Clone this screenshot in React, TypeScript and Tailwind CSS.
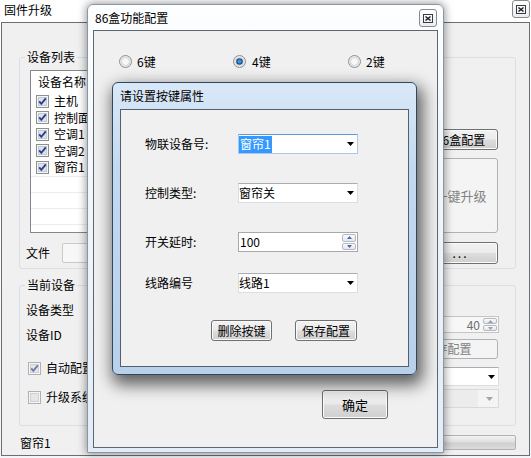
import type { ReactNode } from 'react'

// ─── Common control styles ────────────────────────────────────────────────────

const BUTTON =
  'flex items-center justify-center rounded-[3px] border border-[#707070] bg-[linear-gradient(to_bottom,#f2f2f2_0%,#ebebeb_48%,#dddddd_52%,#cfcfcf_100%)] shadow-[inset_0_0_0_1px_#fbfbfb] text-[12px] leading-none text-black'

const BUTTON_DISABLED =
  'flex items-center justify-center rounded-[3px] border border-[#adb2b5] bg-[#f4f4f4] text-[12px] leading-none text-[#838383]'

function CloseButton() {
  return (
    <div className="flex h-[18px] w-[18px] items-center justify-center rounded-[3px] border border-[#8a8a8a] bg-[linear-gradient(to_bottom,#ffffff,#e9edf2)]">
      <svg width="10" height="9" viewBox="0 0 10 9">
        <rect x="0.5" y="0.5" width="9" height="8" fill="none" stroke="#3a3a3a" />
        <path d="M2.5 2.5 L7.5 6.5 M7.5 2.5 L2.5 6.5" stroke="#1a1a1a" strokeWidth="1.4" />
      </svg>
    </div>
  )
}

function CheckBox({ checked, disabled }: { checked?: boolean; disabled?: boolean }) {
  return (
    <svg width="13" height="13" viewBox="0 0 13 13" className="shrink-0">
      <rect x="0.5" y="0.5" width="12" height="12" fill="#f6f6f6" stroke={disabled ? '#b1b1b1' : '#8e8f8f'} />
      <rect x="2.5" y="2.5" width="8" height="8" fill={disabled ? '#e6e6e6' : '#dde3ea'} stroke={disabled ? '#d0d0d0' : '#c3c9d1'} />
      {checked && (
        <path d="M3.2 6.4 L5.3 8.8 L9.8 3.4" fill="none" stroke={disabled ? '#6b7db0' : '#2a3f8f'} strokeWidth="1.9" />
      )}
    </svg>
  )
}

function Radio({ checked }: { checked?: boolean }) {
  return (
    <svg width="13" height="13" viewBox="0 0 13 13" className="shrink-0">
      <circle cx="6.5" cy="6.5" r="6" fill="#e9e9e9" stroke="#8e8f8f" />
      <circle cx="6.5" cy="6.5" r="4" fill="#f7f7f7" stroke="#d4d4d4" />
      {checked && (
        <>
          <circle cx="6.5" cy="6.5" r="3.3" fill="#1b4f8d" />
          <circle cx="6.5" cy="6.5" r="2" fill="#3f93d9" />
        </>
      )}
    </svg>
  )
}

function DropArrow({ color = '#000' }: { color?: string }) {
  return (
    <svg width="7" height="4" viewBox="0 0 7 4" className="ml-auto mr-[3px] shrink-0">
      <path d="M0 0 H7 L3.5 4 Z" fill={color} />
    </svg>
  )
}

function SpinButtons({ color = '#4a68a8' }: { color?: string }) {
  return (
    <div className="my-px mr-px flex w-[14px] flex-col gap-px">
      <div className="flex flex-1 items-center justify-center rounded-[2px] border border-[#b4bac4] bg-[linear-gradient(to_bottom,#fbfbfb,#e2e5ea)]">
        <svg width="5" height="3" viewBox="0 0 5 3">
          <path d="M0 3 H5 L2.5 0 Z" fill={color} />
        </svg>
      </div>
      <div className="flex flex-1 items-center justify-center rounded-[2px] border border-[#b4bac4] bg-[linear-gradient(to_bottom,#fbfbfb,#e2e5ea)]">
        <svg width="5" height="3" viewBox="0 0 5 3">
          <path d="M0 0 H5 L2.5 3 Z" fill={color} />
        </svg>
      </div>
    </div>
  )
}

function Combo({ children, focused }: { children: ReactNode; focused?: boolean }) {
  return (
    <div
      className={`flex h-[20px] w-[120px] items-center border bg-white ${
        focused ? 'border-[#a9c9ec] border-t-[#5a9ad8]' : 'border-[#dadde3] border-t-[#abadb3]'
      }`}
    >
      {children}
      <DropArrow />
    </div>
  )
}

// ─── Background window: 固件升级 ────────────────────────────────────────────

const devices = ['主机', '控制面板', '空调1', '空调2', '窗帘1']

function FirmwareWindow() {
  return (
    <div className="flex h-full flex-col px-px pb-[2px]">
      <div className="flex h-[22px] items-start">
        <span className="mt-[3px] pl-[3px] text-[12px] leading-[14px]">固件升级</span>
        <div className="ml-auto">
          <CloseButton />
        </div>
      </div>

      <div className="flex flex-1 flex-col border border-[#6d6d6d] bg-[#f0f0f0]">
        {/* 设备列表 */}
        <fieldset className="ml-[17px] mr-[13px] mt-[27px] h-[219px] rounded-[3px] border border-[#d5dfe5]">
          <legend className="ml-[5px] px-[2px] text-[12px] leading-[14px]">设备列表</legend>
          <div className="flex">
            <div className="flex flex-col pl-[10px] pt-[6px]">
              <div className="h-[163px] w-[330px] overflow-hidden border border-[#828790] bg-white">
                <div className="flex h-[22px] items-center pl-[7px] text-[12px]">设备名称</div>
                {devices.map((d) => (
                  <div key={d} className="flex h-[16.5px] items-center gap-[5px] pl-[5px] text-[12px] leading-none">
                    <CheckBox checked />
                    <span>{d}</span>
                  </div>
                ))}
                {[0, 1, 2, 3].map((i) => (
                  <div key={i} className="h-[16px] border-t border-[#ececec]" />
                ))}
              </div>
              <div className="-ml-[4px] mt-[10px] flex h-[20px] items-center">
                <span className="text-[12px]">文件</span>
                <div className="ml-[12px] h-[20px] w-[300px] rounded-[2px] border border-[#cacaca] bg-[#f7f7f7]" />
              </div>
            </div>
            <div className="ml-auto mr-[17px] flex w-[75px] flex-col pt-[65px]">
              <div className={`${BUTTON} h-[21px] border-[#3c7fb1] shadow-[inset_0_0_0_1px_#9fdaf8]`}>86盒配置</div>
              <div className={`${BUTTON_DISABLED} mt-[8px] h-[75px] text-[13px]`}>一键升级</div>
              <div className={`${BUTTON} mt-[9px] h-[22px] tracking-[2px]`}>...</div>
            </div>
          </div>
        </fieldset>

        {/* 当前设备 */}
        <fieldset className="ml-[17px] mr-[13px] mt-[9px] h-[148px] rounded-[3px] border border-[#d5dfe5]">
          <legend className="ml-[5px] px-[2px] text-[12px] leading-[14px]">当前设备</legend>
          <div className="flex">
            <div className="flex flex-col pl-[6px] pt-[8px] text-[12px]">
              <div className="flex h-[20px] items-center">设备类型</div>
              <div className="mt-[5px] flex h-[20px] items-center">设备ID</div>
              <div className="ml-[2px] mt-[13px] flex h-[20px] items-center gap-[5px]">
                <CheckBox checked disabled />
                <span>自动配置</span>
              </div>
              <div className="ml-[2px] mt-[9px] flex h-[20px] items-center gap-[5px]">
                <CheckBox disabled />
                <span>升级系统</span>
              </div>
            </div>
            <div className="ml-auto mr-[16px] flex w-[90px] flex-col pt-[24px]">
              <div className="flex h-[17px] items-stretch border border-[#c5c5c5] bg-[#f7f7f7]">
                <span className="flex flex-1 items-center justify-end pr-[3px] text-[12px] leading-none text-[#6d6d6d]">40</span>
                <SpinButtons color="#9aa0aa" />
              </div>
              <div className={`${BUTTON_DISABLED} ml-[2px] mr-px mt-[6px] h-[20px] text-[12px] pr-[14px]`}>保存配置</div>
              <div className="mt-[8px] flex h-[19px] items-center border border-[#dadde3] border-t-[#abadb3] bg-white">
                <DropArrow />
              </div>
              <div className="mt-[3px] flex h-[19px] items-center border border-[#d9d9d9] bg-[#f4f4f4]">
                <div className="h-full flex-1 bg-[#ececec]" />
                <div className="ml-[6px] mr-[2px] flex w-[12px] items-center">
                  <DropArrow color="#a3a3a3" />
                </div>
              </div>
            </div>
          </div>
        </fieldset>

        {/* status + progress */}
        <div className="mt-[9px] flex h-[15px] items-center">
          <span className="pl-[18px] text-[12px] leading-none">窗帘1</span>
          <div className="ml-auto mr-[13px] h-[15px] w-[150px] rounded-[2px] border border-[#b2b2b2] bg-[linear-gradient(to_bottom,#f3f3f3,#e0e0e0_45%,#cfcfcf_55%,#dcdcdc)]" />
        </div>
      </div>
    </div>
  )
}

// ─── 86盒功能配置 dialog ─────────────────────────────────────────────────────

function BoxConfigDialog() {
  return (
    <div className="absolute left-[87px] top-[4px] flex h-[449px] w-[357px] flex-col rounded-t-[6px] border border-[#8996a5] bg-[linear-gradient(to_bottom,#fdfeff,#f1f5fa_50%,#e2ecf7)] px-[5px] pb-[4px] shadow-[0_0_8px_1px_rgba(0,0,0,0.4)]">
      <div className="flex h-[25px] items-start">
        <span className="mt-[6px] pl-[2px] text-[12px] leading-[14px]">86盒功能配置</span>
        <div className="ml-auto mr-px mt-[4px]">
          <CloseButton />
        </div>
      </div>
      <div className="flex flex-1 flex-col border border-[#5c6773] bg-[#f0f0f0]">
        <div className="flex pl-[25px] pt-[24px] text-[12px] leading-none">
          <label className="flex w-[114px] items-center gap-[5px]">
            <Radio />
            6键
          </label>
          <label className="flex w-[115px] items-center gap-[6px]">
            <Radio checked />
            4键
          </label>
          <label className="flex items-center gap-[5px]">
            <Radio />
            2键
          </label>
        </div>
        <div className="flex-1" />
        <div className="flex justify-end pb-[28px] pr-[49px]">
          <div className={`${BUTTON} h-[29px] w-[66px] text-[13px]`}>确定</div>
        </div>
      </div>
    </div>
  )
}

// ─── 请设置按键属性 dialog ───────────────────────────────────────────────────

function KeyPropsDialog() {
  return (
    <div className="absolute left-[112px] top-[82px] flex h-[293px] w-[305px] flex-col rounded-[6px] border border-[#31465f] bg-[linear-gradient(to_bottom,#d9e8f7,#c3d9f0_30%,#b8d0ea)] px-[7px] pb-[7px] shadow-[3px_7px_16px_3px_rgba(0,0,0,0.6)]">
      <div className="flex h-[26px] items-center">
        <span className="text-[12px] leading-[14px]">请设置按键属性</span>
      </div>
      <div className="flex flex-1 flex-col border border-[#52606f] bg-[#f0f0f0] pt-[24px] text-[12px] leading-none">
        <div className="flex h-[20px] items-center">
          <span className="w-[117px] pl-[24px]">物联设备号:</span>
          <Combo focused>
            <span className="flex h-[17px] items-center bg-[#3399ff] px-px text-white">窗帘1</span>
          </Combo>
        </div>
        <div className="mt-[29px] flex h-[20px] items-center">
          <span className="w-[117px] pl-[24px]">控制类型:</span>
          <Combo>
            <span>窗帘关</span>
          </Combo>
        </div>
        <div className="mt-[29px] flex h-[20px] items-center">
          <span className="w-[117px] pl-[24px]">开关延时:</span>
          <div className="flex h-[20px] w-[120px] items-stretch border border-[#a8a8a8] bg-white">
            <span className="flex flex-1 items-center pl-px">100</span>
            <SpinButtons />
          </div>
        </div>
        <div className="mt-[21px] flex h-[20px] items-center">
          <span className="w-[117px] pl-[24px]">线路编号</span>
          <Combo>
            <span>线路1</span>
          </Combo>
        </div>
        <div className="mt-[27px] flex pl-[90px]">
          <div className={`${BUTTON} h-[21px] w-[61px]`}>删除按键</div>
          <div className={`${BUTTON} ml-[23px] h-[21px] w-[62px]`}>保存配置</div>
        </div>
      </div>
    </div>
  )
}

export default function App() {
  return (
    <div className="relative h-[458px] w-[531px] overflow-hidden bg-[linear-gradient(to_bottom,#ffffff,#f2f6fa)] font-['Noto_Sans_CJK_SC','Noto_Sans',sans-serif] text-[12px] text-black">
      <FirmwareWindow />
      <BoxConfigDialog />
      <KeyPropsDialog />
    </div>
  )
}
